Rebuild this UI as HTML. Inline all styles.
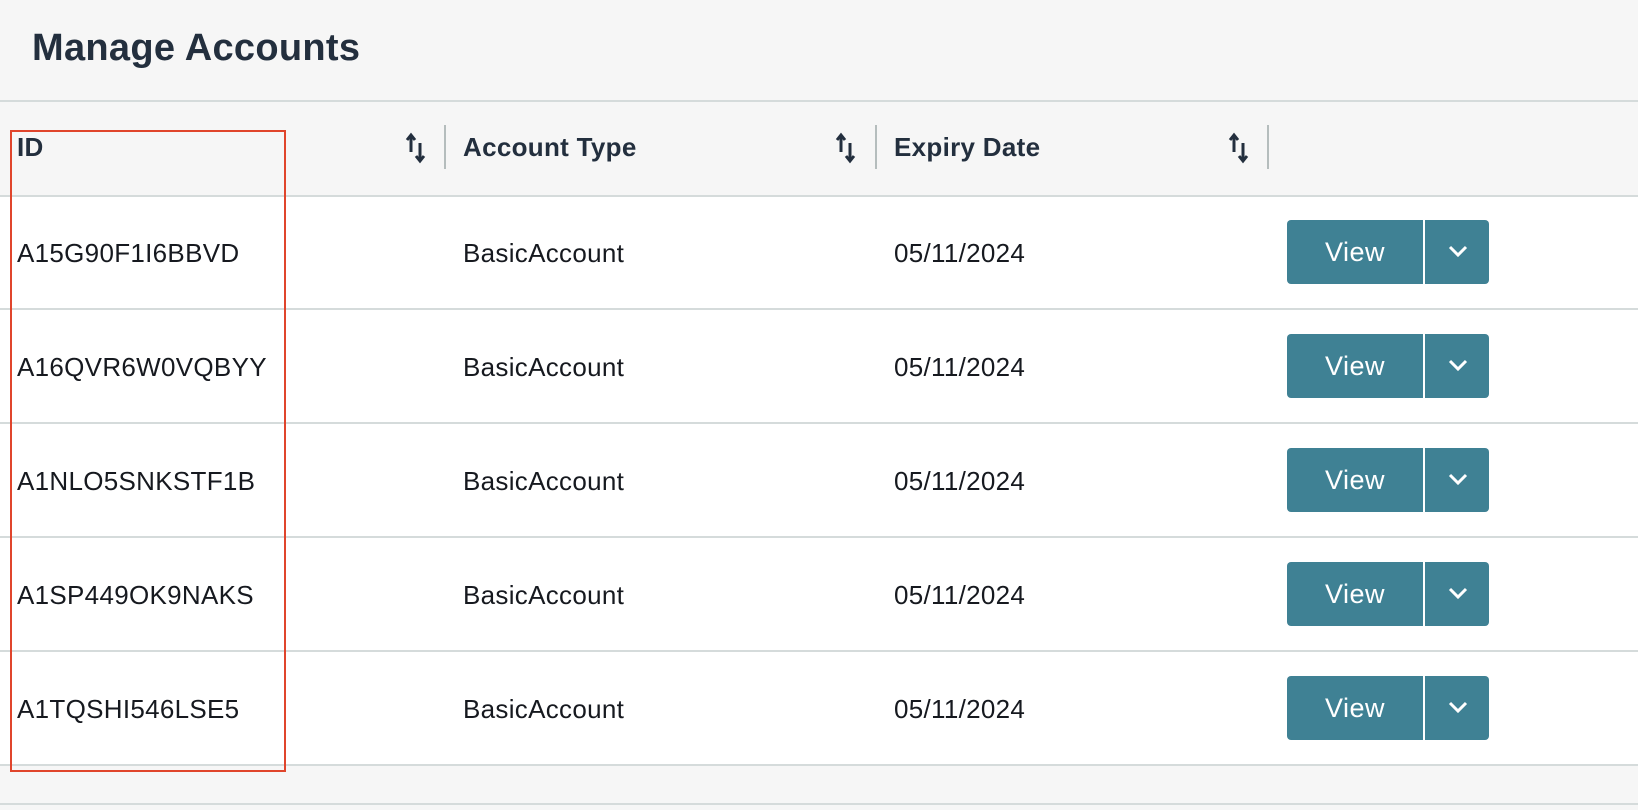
<!DOCTYPE html>
<html><head><style>
*{margin:0;padding:0;box-sizing:border-box}
body{width:1638px;height:810px;background:#f6f6f6;font-family:"Liberation Sans",sans-serif;color:#1f2937;position:relative;overflow:hidden}
.t{position:absolute;left:32px;top:27px;font-size:38px;font-weight:bold;color:#232f3e;letter-spacing:0.3px}
.hl{position:absolute;left:0;width:1638px;height:2px;background:#d5dbdb}
.rows{position:absolute;left:0;top:196px;width:1638px;height:570px;background:#fff}
.tx{position:absolute;font-size:26px;color:#16191f;letter-spacing:0.3px}
.h{font-weight:bold;color:#232f3e;letter-spacing:0.3px}
.dv{position:absolute;width:2px;height:44px;top:125px;background:#b5bdbd}
.btn{position:absolute;left:1287px;width:202px;height:64px;background:#3f8194;border-radius:4px}
.btn span{position:absolute;left:0;width:136px;top:0;line-height:64px;text-align:center;color:#fff;font-size:27px;letter-spacing:0.5px}
.btn i{position:absolute;left:136px;top:0;width:2px;height:64px;background:#fff}
.btn svg{position:absolute;left:160px;top:23px}
.box{position:absolute;left:10px;top:130px;width:276px;height:642px;border:2px solid #e0452c}
</style></head><body>
<div class="t">Manage Accounts</div>
<div class="hl" style="top:100px"></div>
<div class="tx h" style="left:17px;top:132px">ID</div>
<div class="tx h" style="left:463px;top:132px">Account Type</div>
<div class="tx h" style="left:894px;top:132px">Expiry Date</div>
<svg style="position:absolute;left:404px;top:132px" width="24" height="32" viewBox="0 0 24 32"><path d="M7 20V3M3 8l4-5 4 5M16 11v18M12 24l4 5 4-5" stroke="#232f3e" stroke-width="3" fill="none"/></svg>
<svg style="position:absolute;left:834px;top:132px" width="24" height="32" viewBox="0 0 24 32"><path d="M7 20V3M3 8l4-5 4 5M16 11v18M12 24l4 5 4-5" stroke="#232f3e" stroke-width="3" fill="none"/></svg>
<svg style="position:absolute;left:1227px;top:132px" width="24" height="32" viewBox="0 0 24 32"><path d="M7 20V3M3 8l4-5 4 5M16 11v18M12 24l4 5 4-5" stroke="#232f3e" stroke-width="3" fill="none"/></svg>
<div class="dv" style="left:444px"></div><div class="dv" style="left:875px"></div><div class="dv" style="left:1267px"></div>
<div class="rows"></div>
<div class="hl" style="top:195px"></div>
<div class="hl" style="top:308px"></div>
<div class="hl" style="top:422px"></div>
<div class="hl" style="top:536px"></div>
<div class="hl" style="top:650px"></div>
<div class="hl" style="top:764px"></div>
<div class="hl" style="top:803px"></div>

<div class="tx" style="left:17px;top:238px">A15G90F1I6BBVD</div>
<div class="tx" style="left:463px;top:238px">BasicAccount</div>
<div class="tx" style="left:894px;top:238px">05/11/2024</div>
<div class="btn" style="top:220px"><span>View</span><i></i><svg width="22" height="16" viewBox="0 0 22 16"><path d="M3 4l8 8 8-8" stroke="#fff" stroke-width="3" fill="none"/></svg></div>

<div class="tx" style="left:17px;top:352px">A16QVR6W0VQBYY</div>
<div class="tx" style="left:463px;top:352px">BasicAccount</div>
<div class="tx" style="left:894px;top:352px">05/11/2024</div>
<div class="btn" style="top:334px"><span>View</span><i></i><svg width="22" height="16" viewBox="0 0 22 16"><path d="M3 4l8 8 8-8" stroke="#fff" stroke-width="3" fill="none"/></svg></div>

<div class="tx" style="left:17px;top:466px">A1NLO5SNKSTF1B</div>
<div class="tx" style="left:463px;top:466px">BasicAccount</div>
<div class="tx" style="left:894px;top:466px">05/11/2024</div>
<div class="btn" style="top:448px"><span>View</span><i></i><svg width="22" height="16" viewBox="0 0 22 16"><path d="M3 4l8 8 8-8" stroke="#fff" stroke-width="3" fill="none"/></svg></div>

<div class="tx" style="left:17px;top:580px">A1SP449OK9NAKS</div>
<div class="tx" style="left:463px;top:580px">BasicAccount</div>
<div class="tx" style="left:894px;top:580px">05/11/2024</div>
<div class="btn" style="top:562px"><span>View</span><i></i><svg width="22" height="16" viewBox="0 0 22 16"><path d="M3 4l8 8 8-8" stroke="#fff" stroke-width="3" fill="none"/></svg></div>

<div class="tx" style="left:17px;top:694px">A1TQSHI546LSE5</div>
<div class="tx" style="left:463px;top:694px">BasicAccount</div>
<div class="tx" style="left:894px;top:694px">05/11/2024</div>
<div class="btn" style="top:676px"><span>View</span><i></i><svg width="22" height="16" viewBox="0 0 22 16"><path d="M3 4l8 8 8-8" stroke="#fff" stroke-width="3" fill="none"/></svg></div>

<div class="box"></div>
</body></html>
